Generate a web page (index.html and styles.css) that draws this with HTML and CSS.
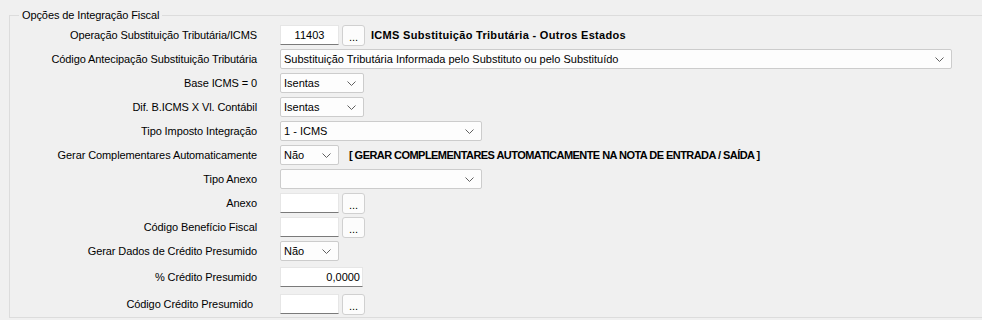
FILE: index.html
```html
<!DOCTYPE html>
<html lang="pt-BR">
<head>
<meta charset="utf-8">
<title>Opções de Integração Fiscal</title>
<link rel="stylesheet" href="styles.css">
</head>
<body>
<fieldset class="group">
  <legend class="group-title">Opções de Integração Fiscal</legend>
  <div class="form">
    <div class="row">
      <label class="lbl">Operação Substituição Tributária/ICMS</label>
      <div class="ctl">
        <div class="edit w58 center">11403</div>
        <div class="btn">...</div>
        <span class="caption">ICMS Substituição Tributária - Outros Estados</span>
      </div>
    </div>
    <div class="row">
      <label class="lbl">Código Antecipação Substituição Tributária</label>
      <div class="ctl">
        <div class="combo wfull"><span>Substituição Tributária Informada pelo Substituto ou pelo Substituído</span><svg class="chev" width="9" height="5" viewBox="0 0 9 5"><polyline points="0.5,0.5 4.5,4.5 8.5,0.5"/></svg></div>
      </div>
    </div>
    <div class="row">
      <label class="lbl">Base ICMS = 0</label>
      <div class="ctl">
        <div class="combo w83"><span>Isentas</span><svg class="chev" width="9" height="5" viewBox="0 0 9 5"><polyline points="0.5,0.5 4.5,4.5 8.5,0.5"/></svg></div>
      </div>
    </div>
    <div class="row">
      <label class="lbl">Dif. B.ICMS X Vl. Contábil</label>
      <div class="ctl">
        <div class="combo w83"><span>Isentas</span><svg class="chev" width="9" height="5" viewBox="0 0 9 5"><polyline points="0.5,0.5 4.5,4.5 8.5,0.5"/></svg></div>
      </div>
    </div>
    <div class="row">
      <label class="lbl">Tipo Imposto Integração</label>
      <div class="ctl">
        <div class="combo w201"><span>1 - ICMS</span><svg class="chev" width="9" height="5" viewBox="0 0 9 5"><polyline points="0.5,0.5 4.5,4.5 8.5,0.5"/></svg></div>
      </div>
    </div>
    <div class="row">
      <label class="lbl">Gerar Complementares Automaticamente</label>
      <div class="ctl">
        <div class="combo w58"><span>Não</span><svg class="chev" width="9" height="5" viewBox="0 0 9 5"><polyline points="0.5,0.5 4.5,4.5 8.5,0.5"/></svg></div>
        <span class="caption wide">[ GERAR COMPLEMENTARES AUTOMATICAMENTE NA NOTA DE ENTRADA / SAÍDA ]</span>
      </div>
    </div>
    <div class="row">
      <label class="lbl">Tipo Anexo</label>
      <div class="ctl">
        <div class="combo w201"><span></span><svg class="chev" width="9" height="5" viewBox="0 0 9 5"><polyline points="0.5,0.5 4.5,4.5 8.5,0.5"/></svg></div>
      </div>
    </div>
    <div class="row">
      <label class="lbl">Anexo</label>
      <div class="ctl">
        <div class="edit w58"></div>
        <div class="btn">...</div>
      </div>
    </div>
    <div class="row">
      <label class="lbl">Código Benefício Fiscal</label>
      <div class="ctl">
        <div class="edit w58"></div>
        <div class="btn">...</div>
      </div>
    </div>
    <div class="row">
      <label class="lbl">Gerar Dados de Crédito Presumido</label>
      <div class="ctl">
        <div class="combo w58"><span>Não</span><svg class="chev" width="9" height="5" viewBox="0 0 9 5"><polyline points="0.5,0.5 4.5,4.5 8.5,0.5"/></svg></div>
      </div>
    </div>
    <div class="row spaced">
      <label class="lbl">% Crédito Presumido</label>
      <div class="ctl">
        <div class="edit w82 right">0,0000</div>
      </div>
    </div>
    <div class="row spaced last">
      <label class="lbl shifted">Código Crédito Presumido</label>
      <div class="ctl">
        <div class="edit w58"></div>
        <div class="btn">...</div>
      </div>
    </div>
  </div>
</fieldset>
</body>
</html>
```

FILE: styles.css
```css
* { box-sizing: border-box; }

html, body {
  margin: 0;
  padding: 0;
  background: #f0f0f0;
  font-family: "Liberation Sans", Arial, sans-serif;
  font-size: 11px;
  color: #000;
  overflow: hidden;
}

.group {
  margin: 8px -20px 0 9px;
  padding: 0 0 1px 0;
  border: 1px solid #dcdcdc;
  min-width: 0;
}

.group-title {
  margin-left: 9px;
  padding: 0 3px;
  line-height: 14px;
  height: 14px;
  letter-spacing: -0.1px;
}

.form {
  display: flex;
  flex-direction: column;
  padding-top: 1px;
}

.row {
  display: flex;
  align-items: center;
  height: 24px;
  column-gap: 23px;
}

.row.spaced { margin-top: 2px; }
.row.last { margin-top: 3px; }

.lbl {
  width: 247px;
  text-align: right;
  white-space: nowrap;
  letter-spacing: -0.1px;
}

.lbl.shifted { padding-right: 4px; }

.ctl {
  display: flex;
  align-items: center;
}

.edit {
  height: 20px;
  background: #fff;
  border: 1px solid #e6e6e6;
  border-bottom-color: #7a7a7a;
  padding: 0 3px;
  line-height: 18px;
  white-space: nowrap;
}

.edit.center { text-align: center; }
.edit.right { text-align: right; padding-right: 2px; }

.w58 { width: 59px; }
.w82 { width: 83px; }
.w83 { width: 84px; }
.w201 { width: 202px; }
.wfull { width: 672px; }

.combo {
  height: 20px;
  background: #fdfdfd;
  border: 1px solid #cccccc;
  border-radius: 2px;
  padding: 0 7px 0 3px;
  display: flex;
  align-items: center;
  justify-content: space-between;
  white-space: nowrap;
}

.chev {
  flex: none;
  fill: none;
  stroke: #606060;
  stroke-width: 1;
}

.btn {
  width: 23px;
  height: 21px;
  margin-left: 3px;
  background: #fcfcfc;
  border: 1px solid #d0d0d0;
  border-radius: 3px;
  display: flex;
  justify-content: center;
  align-items: flex-end;
  padding-bottom: 2px;
  line-height: 11px;
}

.caption {
  margin-left: 6px;
  font-weight: bold;
  white-space: nowrap;
  letter-spacing: 0.3px;
}

.caption.wide {
  margin-left: 10px;
  letter-spacing: -0.55px;
}
```
